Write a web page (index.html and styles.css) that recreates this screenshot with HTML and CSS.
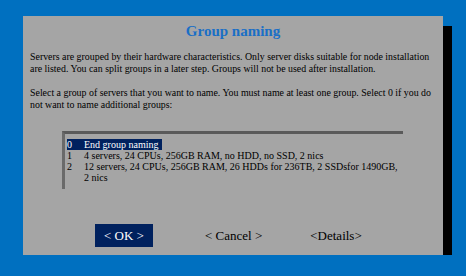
FILE: index.html
```html
<!DOCTYPE html>
<html lang="en">

<head>
    <meta charset="UTF-8">
    <meta name="viewport" content="width=device-width, initial-scale=1.0">
    <title>Group naming</title>
    <link rel="stylesheet" href="styles.css">
</head>

<body>
    <div class="dialog">
        <h1 class="title">Group naming</h1>
        <p class="text">Servers are grouped by their hardware characteristics. Only server disks suitable for node installation<br>are listed. You can split groups in a later step. Groups will not be used after installation.</p>
        <p class="text">Select a group of servers that you want to name. You must name at least one group. Select 0 if you do<br>not want to name additional groups:</p>
        <div class="list">
            <div class="row selected">
                <span class="num">0</span>
                <span>End group naming</span>
            </div>
            <div class="row">
                <span class="num">1</span>
                <span>4 servers, 24 CPUs, 256GB RAM, no HDD, no SSD, 2 nics</span>
            </div>
            <div class="row">
                <span class="num">2</span>
                <span>12 servers, 24 CPUs, 256GB RAM, 26 HDDs for 236TB, 2 SSDsfor 1490GB,<br>2 nics</span>
            </div>
        </div>
        <div class="buttons">
            <button class="btn active">&lt; OK &gt;</button>
            <button class="btn">&lt; Cancel &gt;</button>
            <button class="btn">&lt;Details&gt;</button>
        </div>
    </div>
</body>

</html>
```

FILE: styles.css
```css
* {
    margin: 0;
    padding: 0;
    box-sizing: border-box;
}

body {
    background: #0070c0;
    padding: 16px 0 0 23px;
    font-family: "Liberation Serif", "Times New Roman", serif;
    color: #000;
}

.dialog {
    width: 420px;
    height: 239px;
    background: #a5a5a5;
    box-shadow: 9px 10px 0 #000;
    padding: 5px 2px 0 7px;
}

.title {
    text-align: center;
    font-size: 15px;
    line-height: 20px;
    color: #1a6fc6;
    margin: 0 5px 10px 0;
}

.text {
    font-size: 9.9px;
    line-height: 12px;
    margin-bottom: 12px;
    white-space: nowrap;
}

.list {
    margin: 20px 38px 0 32px;
    height: 58px;
    border-top: 3px solid #5a5a5a;
    border-left: 3px solid #6a6a6a;
    padding: 5px 2px 0 2px;
    font-size: 10px;
    line-height: 11px;
    white-space: nowrap;
}

.row {
    display: grid;
    grid-template-columns: 17px 1fr;
}

.row.selected {
    width: fit-content;
    background: #00215e;
    color: #fff;
    padding-right: 4px;
}

.buttons {
    display: flex;
    margin-top: 35px;
    padding-left: 65px;
}

.btn {
    font-family: inherit;
    font-size: 13px;
    background: none;
    border: none;
    color: #000;
    height: 23px;
}

.btn.active {
    width: 58px;
    background: #00215e;
    color: #fff;
}

.btn:nth-child(2) {
    margin-left: 52px;
}

.btn:nth-child(3) {
    margin-left: 48px;
}
```
